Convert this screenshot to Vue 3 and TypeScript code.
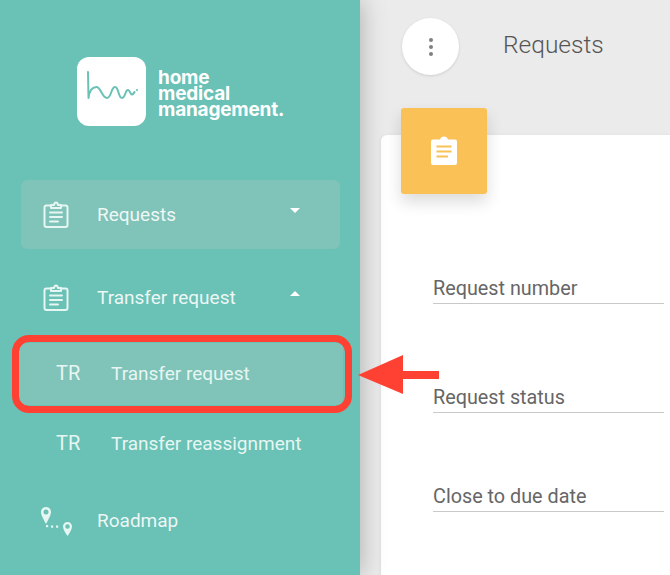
<template>
  <div class="page">
    <aside class="sidebar">
      <div class="brand">
        <div class="brand-mark">
          <svg width="69" height="69" viewBox="0 0 69 69" fill="none">
            <path d="M11 15 L11.500 41 C12.500 33 16 30 19.500 30 C24 30 25 41 30 41 C34.500 41 34 30 38 30 C42 30 41 41 45 41 C48.500 41 48 33 51 33 C53 33 53.500 38 55 37.500 C56.500 37 57 36 57.500 35" stroke="#6ac1b5" stroke-width="2" stroke-linecap="round" stroke-linejoin="round" />
            <circle cx="60" cy="33" r="1.100" fill="#6ac1b5" />
          </svg>
        </div>
        <div class="brand-name">home<br />medical<br />management.</div>
      </div>

      <nav class="nav">
        <div class="nav-item active">
          <svg class="nav-icon" width="30" height="30" viewBox="0 0 30 30" fill="none" stroke="#e6f6f3" stroke-width="2" stroke-linejoin="round">
            <path d="M10 5.500 H5.500 Q3.500 5.500 3.500 7.500 V25 Q3.500 27 5.500 27 H24.500 Q26.500 27 26.500 25 V7.500 Q26.500 5.500 24.500 5.500 H20" />
            <path d="M10 8 V5 H13 Q13.500 2.500 15 2.500 Q16.500 2.500 17 5 H20 V8 Z" />
            <path d="M9 12.500 H21 M9 17 H21 M9 21.500 H17" stroke-linecap="round" />
          </svg>
          <span class="nav-label">Requests</span>
          <span class="caret down"></span>
        </div>

        <div class="nav-item">
          <svg class="nav-icon" width="30" height="30" viewBox="0 0 30 30" fill="none" stroke="#e6f6f3" stroke-width="2" stroke-linejoin="round">
            <path d="M10 5.500 H5.500 Q3.500 5.500 3.500 7.500 V25 Q3.500 27 5.500 27 H24.500 Q26.500 27 26.500 25 V7.500 Q26.500 5.500 24.500 5.500 H20" />
            <path d="M10 8 V5 H13 Q13.500 2.500 15 2.500 Q16.500 2.500 17 5 H20 V8 Z" />
            <path d="M9 12.500 H21 M9 17 H21 M9 21.500 H17" stroke-linecap="round" />
          </svg>
          <span class="nav-label">Transfer request</span>
          <span class="caret up"></span>
        </div>

        <div class="sub-item active">
          <span class="sub-abbr">TR</span>
          <span class="sub-label">Transfer request</span>
        </div>
        <div class="sub-item">
          <span class="sub-abbr">TR</span>
          <span class="sub-label">Transfer reassignment</span>
        </div>

        <div class="nav-item roadmap">
          <svg class="nav-icon" width="38" height="34" viewBox="0 0 38 34" fill="#e6f6f3">
            <path fill-rule="evenodd" d="M8 3 C11 3 13 5.300 13 8 C13 11.500 10 16 8 20 C6 16 3 11.500 3 8 C3 5.300 5 3 8 3 Z M8 5.500 A2.500 2.500 0 1 0 8 10.500 A2.500 2.500 0 1 0 8 5.500 Z" />
            <path fill-rule="evenodd" d="M29.500 18 C32 18 34 20 34 22.500 C34 25.500 31.500 29 29.500 32 C27.500 29 25 25.500 25 22.500 C25 20 27 18 29.500 18 Z M29.500 20.200 A2.300 2.300 0 1 0 29.500 24.800 A2.300 2.300 0 1 0 29.500 20.200 Z" />
            <rect x="8" y="21" width="2.200" height="2.200" />
            <rect x="13" y="21.500" width="2.200" height="2.200" />
            <rect x="18" y="21.500" width="2.200" height="2.200" />
          </svg>
          <span class="nav-label">Roadmap</span>
        </div>
      </nav>
    </aside>

    <main class="main">
      <header class="topbar">
        <button class="menu-btn">
          <span class="dot"></span>
          <span class="dot"></span>
          <span class="dot"></span>
        </button>
        <h1 class="title">Requests</h1>
      </header>

      <section class="card">
        <div class="card-icon">
          <svg width="28" height="30" viewBox="0 0 28 30">
            <path fill="#fff" d="M3 3.500 H10 Q11 0.500 14 0.500 Q17 0.500 18 3.500 H25 Q27 3.500 27 5.500 V27 Q27 29 25 29 H3 Q1 29 1 27 V5.500 Q1 3.500 3 3.500 Z" />
            <path stroke="#fac157" stroke-width="2.200" d="M6.500 10.500 H21.500 M6.500 15.500 H21.500 M6.500 20.500 H18" />
          </svg>
        </div>
        <div class="fields">
          <div v-for="f in fields" :key="f" class="field">{{ f }}</div>
        </div>
      </section>
    </main>

    <div class="callout"></div>
    <svg class="arrow" width="84" height="44" viewBox="0 0 84 44">
      <path fill="#ff4133" d="M0 21 L45 1 V17 H81 V25 H45 V40 Z" />
    </svg>
  </div>
</template>

<script setup lang="ts">
const fields: string[] = ['Request number', 'Request status', 'Close to due date']
</script>

<style>
html, body { margin: 0; overflow: hidden; }
</style>

<style scoped>
.page { position: relative; display: flex; width: 670px; height: 575px; overflow: hidden; font-family: Roboto, "Liberation Sans", sans-serif; background: #ebebeb; }

.sidebar { position: relative; z-index: 2; flex: 0 0 360px; box-sizing: border-box; padding: 57px 20px 0 21px; background: #6ac1b5; box-shadow: 0 0 24px rgba(0,0,0,0.28); }
.brand { display: flex; align-items: center; gap: 12px; margin-left: 56px; }
.brand-mark { width: 69px; height: 69px; border-radius: 12px; background: #fff; }
.brand-name { padding-top: 4px; color: #fff; font-family: Inter, "Liberation Sans", sans-serif; font-size: 19px; font-weight: 700; line-height: 16px; letter-spacing: -0.2px; }

.nav { display: flex; flex-direction: column; margin-top: 54px; color: #fff; }
.nav-item { display: flex; align-items: center; height: 69px; border-radius: 6px; padding-left: 20px; margin-bottom: 14px; position: relative; }
.nav-item.active, .sub-item.active { background: #80c3b8; }
.nav-icon { flex: none; }
.nav-label { margin-left: 26px; font-size: 19px; font-weight: 400; opacity: 0.88; }
.caret { position: absolute; left: 269px; width: 0; height: 0; border-left: 5px solid transparent; border-right: 5px solid transparent; }
.caret.down { top: 28px; border-top: 5px solid #fff; }
.caret.up { top: 28px; border-bottom: 5px solid #fff; }

.sub-item { display: flex; align-items: center; height: 62px; margin: -3px -3px 7px -2px; border-radius: 6px; padding-left: 37px; font-size: 19px; color: #e6f6f3; }
.sub-item.active { box-sizing: border-box; padding-bottom: 2px; }
.sub-item + .sub-item { margin-top: 0; }
.sub-abbr { width: 55px; font-size: 20px; }

.roadmap { margin-top: 5px; padding-left: 17px; }
.roadmap .nav-label { margin-left: 21px; }

.main { flex: 1; min-width: 0; display: flex; flex-direction: column; padding-left: 21px; }
.topbar { display: flex; align-items: center; height: 57px; margin-top: 18px; padding-left: 21px; }
.menu-btn { display: flex; flex-direction: column; align-items: center; justify-content: center; gap: 3px; width: 57px; height: 57px; padding: 0; border: none; border-radius: 50%; background: #fff; box-shadow: 0 1px 3px rgba(0,0,0,0.12); }
.dot { width: 4px; height: 4px; border-radius: 50%; background: #808080; }
.title { margin: 0 0 5px 44px; font-size: 24.500px; font-weight: 300; color: #555; }

.card { flex: 1; margin-top: 60px; border-radius: 6px 0 0 0; background: #fff; box-shadow: 0 1px 4px rgba(0,0,0,0.08); }
.card-icon { display: flex; align-items: center; justify-content: center; width: 86px; height: 86px; margin: -27px 0 0 20px; border-radius: 3px; background: #fac157; box-shadow: 0 8px 16px rgba(0,0,0,0.14); }
.fields { display: flex; flex-direction: column; margin: 85px 6px 0 52px; }
.field { box-sizing: border-box; height: 25px; margin-bottom: 84px; border-bottom: 1px solid #c9c9c9; color: #666; font-size: 19.800px; line-height: 20px; white-space: nowrap; }
.field:nth-child(2) { margin-bottom: 74px; }

.callout { position: absolute; z-index: 3; left: 12px; top: 335px; width: 340px; height: 78px; box-sizing: border-box; border: 7px solid #ff4133; border-radius: 17px; }
.arrow { position: absolute; z-index: 3; left: 358px; top: 354px; }
</style>
